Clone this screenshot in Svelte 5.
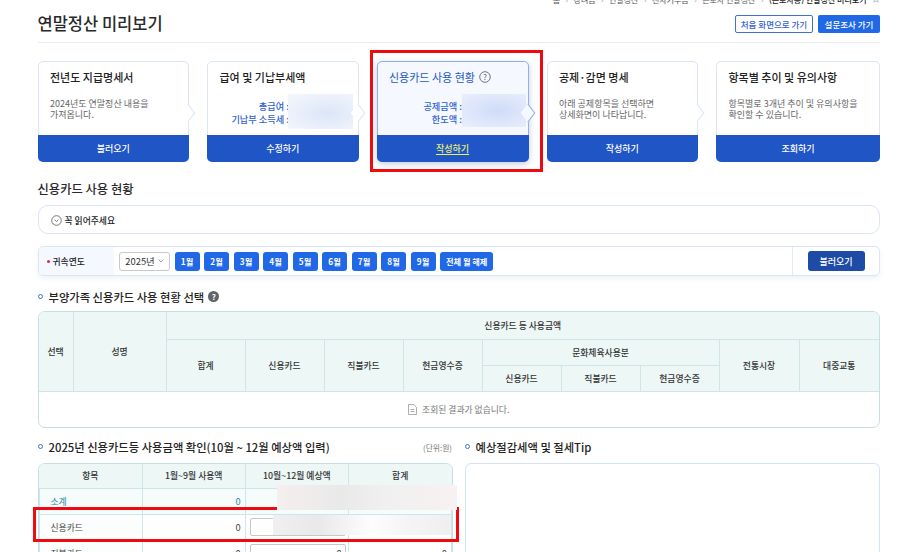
<script>
  const crumbs = ['홈', '장려금', '연말정산', '전자기부금', '근로자 연말정산']
  const steps = [
    { title: '전년도 지급명세서', lines: ['2024년도 연말정산 내용을', '가져옵니다.'], action: '불러오기' },
    { title: '급여 및 기납부세액', amounts: ['총급여 :', '기납부 소득세 :'], action: '수정하기' },
    { title: '신용카드 사용 현황', amounts: ['공제금액 :', '한도액 :'], action: '작성하기', active: true },
    { title: '공제·감면 명세', lines: ['아래 공제항목을 선택하면', '상세화면이 나타납니다.'], action: '작성하기' },
    { title: '항목별 추이 및 유의사항', lines: ['항목별로 3개년 추이 및 유의사항을', '확인할 수 있습니다.'], action: '조회하기' },
  ]
  const months = ['1월', '2월', '3월', '4월', '5월', '6월', '7월', '8월', '9월', '전체 월 해제']
  const rows = [
    { name: '소계', used: '0', total: true },
    { name: '신용카드', used: '0', est: '0', sum: '0' },
    { name: '직불카드', used: '0', est: '0', sum: '0' },
  ]
</script>

<div class="page">
  <nav class="crumbs">
    {#each crumbs as c}
      <span>{c}</span><i>›</i>
    {/each}
    <b>(근로자용) 연말정산 미리보기</b>
    <svg width="8" height="8" viewBox="0 0 8 8"><path d="M4 .6l1 2.3 2.5.2-1.9 1.6.6 2.5L4 5.900 1.800 7.200l.6-2.500L.5 3.100 3 2.900z" fill="none" stroke="#aaa" stroke-width=".7"/></svg>
  </nav>

  <header class="head">
    <h1>연말정산 미리보기</h1>
    <div class="head-btns">
      <button class="ghost">처음 화면으로 가기</button>
      <button class="solid">설문조사 가기</button>
    </div>
  </header>

  <div class="steps">
    {#each steps as s}
      <section class="step" class:active={s.active}>
        <div class="step-body">
          <h2>
            {s.title}
            {#if s.active}
              <svg class="q" width="12" height="12" viewBox="0 0 12 12"><circle cx="6" cy="6" r="5.300" fill="none" stroke="#555" stroke-width=".8"/><text x="6" y="8.600" text-anchor="middle" font-size="7.500" fill="#555">?</text></svg>
            {/if}
          </h2>
          {#if s.lines}
            <p class="desc">{s.lines[0]}<br />{s.lines[1]}</p>
          {:else}
            <div class="amounts">
              {#each s.amounts as a}<div>{a}</div>{/each}
            </div>
            <div class="smudge"></div>
          {/if}
        </div>
        <button class="step-btn">{s.action}</button>
      </section>
    {/each}
  </div>

  <h3 class="sec">신용카드 사용 현황</h3>

  <div class="notice">
    <svg width="11" height="11" viewBox="0 0 11 11"><circle cx="5.500" cy="5.500" r="4.800" fill="none" stroke="#555" stroke-width=".8"/><path d="M3.600 4.700l1.900 1.800 1.900-1.800" fill="none" stroke="#555" stroke-width=".8"/></svg>
    꼭 읽어주세요
  </div>

  <div class="filter">
    <div class="filter-label"><em></em>귀속연도</div>
    <div class="filter-main">
      <div class="select">2025년 <svg width="6" height="4" viewBox="0 0 6 4"><path d="M.5.500L3 3 5.500.500" fill="none" stroke="#888" stroke-width=".8"/></svg></div>
      {#each months as m}
        <button class="month">{m}</button>
      {/each}
    </div>
    <div class="filter-end"><button class="load">불러오기</button></div>
  </div>

  <h4 class="sub">부양가족 신용카드 사용 현황 선택 <span class="hint">?</span></h4>

  <div class="tbl">
    <table class="usage">
      <colgroup>
        <col style="width:34.500px" /><col style="width:93px" />
        <col span="7" style="width:79px" />
        <col style="width:80px" /><col />
      </colgroup>
      <thead>
        <tr class="r1"><th rowspan="3">선택</th><th rowspan="3">성명</th><th colspan="9">신용카드 등 사용금액</th></tr>
        <tr class="r2">
          <th rowspan="2">합계</th><th rowspan="2">신용카드</th><th rowspan="2">직불카드</th><th rowspan="2">현금영수증</th>
          <th colspan="3">문화체육사용분</th>
          <th rowspan="2">전통시장</th><th rowspan="2">대중교통</th>
        </tr>
        <tr class="r3"><th>신용카드</th><th>직불카드</th><th>현금영수증</th></tr>
      </thead>
      <tbody>
        <tr>
          <td colspan="11" class="empty">
            <svg width="9" height="11" viewBox="0 0 9 11"><path d="M.5.500h5.200L8.500 3.300v7.200H.5z M2.500 5.500h4 M2.500 7.500h4" fill="none" stroke="#999" stroke-width=".8"/></svg>
            조회된 결과가 없습니다.
          </td>
        </tr>
      </tbody>
    </table>
  </div>

  <div class="bottom">
    <div>
      <div class="bottom-head">
        <h4 class="sub">2025년 신용카드등 사용금액 확인(10월 ~ 12월 예상액 입력)</h4>
        <small>(단위:원)</small>
      </div>
      <div class="tbl">
        <table class="amount">
          <thead><tr><th>항목</th><th>1월~9월 사용액</th><th>10월~12월 예상액</th><th>합계</th></tr></thead>
          <tbody>
            {#each rows as r}
              <tr class:total={r.total}>
                <td class="name">{r.name}</td>
                <td class="num">{r.used}</td>
                <td class="num">{#if !r.total}<input value={r.est} readonly />{/if}</td>
                <td class="num">{r.sum ?? ''}</td>
              </tr>
            {/each}
          </tbody>
        </table>
      </div>
    </div>
    <div>
      <div class="bottom-head"><h4 class="sub">예상절감세액 및 절세Tip</h4></div>
      <div class="tip"></div>
    </div>
  </div>

  <!-- red marks drawn over the capture, blurred-out values pasted on top of them -->
  <div class="mark m1"></div>
  <div class="mark m2"></div>
  <div class="blur b1"></div>
  <div class="blur b2"></div>
</div>

<style>
  :global(body) {
    margin: 0;
    background: #fff;
  }

  .page {
    position: relative;
    width: 897px;
    height: 552px;
    overflow: hidden;
    box-sizing: border-box;
    padding: 0 17px 0 37.5px;
    font-family: "Noto Sans CJK KR", "Noto Sans", sans-serif;
    color: #222;
  }

  button {
    font: inherit;
    border: 0;
    padding: 0;
    cursor: pointer;
  }

  .crumbs {
    display: flex;
    justify-content: flex-end;
    align-items: center;
    gap: 5.500px;
    height: 10px;
    margin-top: -6px;
    font-size: 8px;
    color: #555;
    white-space: nowrap;
  }

  .crumbs i {
    font-style: normal;
    color: #999;
  }

  .crumbs b {
    font-weight: 500;
    color: #222;
  }

  .head {
    display: flex;
    justify-content: space-between;
    align-items: center;
    height: 37.500px;
    border-bottom: 1px solid #e9ebef;
  }

  h1 {
    margin: 0;
    font-size: 16.500px;
    font-weight: 500;
    color: #2a2a2a;
  }

  .head-btns {
    display: flex;
    gap: 5px;
    margin-top: 3px;
  }

  .head-btns button {
    height: 18px;
    border-radius: 2px;
    font-size: 8.500px;
    font-weight: 500;
    box-sizing: border-box;
  }

  .ghost {
    width: 78px;
    background: #fff;
    border: 1px solid #3f6fe0;
    color: #3460d0;
  }

  .solid {
    width: 62px;
    background: #2168e6;
    color: #fff;
  }

  .steps {
    display: grid;
    grid-template-columns: 151.500px 151.500px 152px 151.500px 1fr;
    gap: 18px;
    margin-top: 18px;
  }

  .step {
    position: relative;
    display: flex;
    flex-direction: column;
    height: 101px;
    box-sizing: border-box;
    border: 1px solid #dbe5f7;
    border-radius: 5px;
    background: #fff;
  }

  .step:not(:last-child)::after {
    content: "";
    position: absolute;
    right: -6px;
    top: 45px;
    width: 11px;
    height: 11px;
    background: inherit;
    border-top: 1px solid #dbe5f7;
    border-right: 1px solid #dbe5f7;
    transform: rotate(45deg) skew(8deg, 8deg);
  }

  .step.active {
    background: #f6f8ff;
    border-color: #94aee6;
    box-shadow: 0 2px 6px rgba(40, 70, 140, 0.28);
  }

  .step.active::after {
    border-color: #94aee6;
  }

  .step-body {
    position: relative;
    flex: 1;
    padding: 8px 11.500px 0;
    min-height: 0;
  }

  h2 {
    display: flex;
    align-items: center;
    gap: 4px;
    margin: 0;
    height: 14px;
    font-size: 11px;
    font-weight: 500;
    color: #222;
  }

  .active h2 {
    color: #2559c4;
    font-weight: 400;
  }

  .desc {
    margin: 14px 0 0;
    font-size: 9px;
    line-height: 11.500px;
    color: #666;
  }

  .amounts {
    margin: 16px 0 0;
    padding-right: 57px;
    text-align: right;
    font-size: 9.200px;
    line-height: 13.500px;
    font-weight: 500;
    color: #2e62d2;
    white-space: nowrap;
  }

  .active .amounts {
    padding-right: 54px;
  }

  .smudge {
    position: absolute;
    left: 80px;
    top: 32px;
    width: 65px;
    height: 35px;
    background: radial-gradient(ellipse at 60% 55%, #dce6f8, #eef2fb 70%, #f4f7fd);
  }

  .active .smudge {
    left: 84px;
    width: 64px;
    height: 33px;
    background: radial-gradient(ellipse at 55% 50%, #cfdcf8, #e3eafb 75%, #eaf0fc);
  }

  .step-btn {
    position: relative;
    z-index: 1;
    height: 27px;
    flex: none;
    margin: 0 -1px -1px;
    border-radius: 0 0 5px 5px;
    background: #1f55c4;
    color: #fff;
    font-size: 9px;
    font-weight: 500;
  }

  .active .step-btn {
    color: #ecf068;
    text-decoration: underline;
    text-underline-offset: 2px;
  }

  .sec {
    margin: 19px 0 0;
    height: 17px;
    line-height: 17px;
    font-size: 12.300px;
    font-weight: 500;
    color: #2a2a2a;
  }

  .notice {
    display: flex;
    align-items: center;
    gap: 3px;
    margin-top: 7.500px;
    height: 29px;
    box-sizing: border-box;
    padding: 1px 0 0 12px;
    border: 1px solid #dbe5f7;
    border-radius: 10px;
    font-size: 8.800px;
    font-weight: 500;
  }

  .filter {
    display: flex;
    margin-top: 12px;
    height: 30px;
    box-sizing: border-box;
    border: 1px solid #dbe5f7;
    border-radius: 5px;
    box-shadow: 0 3px 5px rgba(90, 100, 130, 0.08);
    overflow: hidden;
  }

  .filter-label {
    display: flex;
    align-items: center;
    gap: 3px;
    width: 75px;
    padding-left: 8px;
    box-sizing: border-box;
    background: #f5f8ff;
    font-size: 8.800px;
    font-weight: 500;
  }

  .filter-label em {
    width: 3px;
    height: 3px;
    border-radius: 50%;
    background: #e0245e;
  }

  .filter-main {
    display: flex;
    flex: 1;
    align-items: center;
    gap: 4.500px;
    padding-left: 5.500px;
  }

  .select {
    display: flex;
    align-items: center;
    justify-content: center;
    gap: 3px;
    width: 51px;
    height: 19px;
    box-sizing: border-box;
    border: 1px solid #c9c9c9;
    border-radius: 3px;
    font-size: 9.400px;
    color: #333;
  }

  .month {
    height: 19px;
    min-width: 25px;
    padding: 0 6px;
    border-radius: 3px;
    background: #2168e6;
    color: #fff;
    font-size: 8.200px;
    font-weight: 700;
  }

  .filter-end {
    display: flex;
    align-items: center;
    width: 87px;
    box-sizing: border-box;
    padding-left: 14.500px;
    border-left: 1px solid #e3e9f5;
  }

  .load {
    width: 57px;
    height: 20px;
    border-radius: 3px;
    background: #1e4ba6;
    color: #fff;
    font-size: 9px;
    font-weight: 500;
  }

  .sub {
    position: relative;
    display: flex;
    align-items: center;
    gap: 4px;
    margin: 0;
    padding-left: 11px;
    height: 16px;
    font-size: 11.300px;
    font-weight: 500;
    color: #222;
    white-space: nowrap;
  }

  .sub::before {
    content: "";
    position: absolute;
    left: 0;
    top: 5px;
    width: 3px;
    height: 3px;
    border: 1.500px solid #3f72e0;
    border-radius: 50%;
  }

  .filter + .sub {
    margin-top: 12.500px;
  }

  .hint {
    display: inline-flex;
    align-items: center;
    justify-content: center;
    width: 11px;
    height: 11px;
    border-radius: 50%;
    background: #606468;
    color: #fff;
    font-size: 8px;
    font-weight: 700;
  }

  .tbl {
    box-sizing: border-box;
    border: 1px solid #c5dfe2;
    border-radius: 7px;
    overflow: hidden;
  }

  .filter + .sub + .tbl {
    margin-top: 6.500px;
  }

  table {
    width: 100%;
    border-collapse: collapse;
    table-layout: fixed;
    font-size: 8.800px;
  }

  th {
    padding: 0;
    font-weight: 500;
    color: #333;
    background: #edf7f6;
    border: 1px solid #cfe5e8;
  }

  tr > :first-child {
    border-left: 0;
  }

  tr > :last-child {
    border-right: 0;
  }

  thead tr:first-child th {
    border-top: 0;
  }

  .r1 { height: 27px; }
  .r2 { height: 26px; }
  .r3 { height: 26px; }

  .empty {
    height: 35px;
    padding: 0;
    text-align: center;
    color: #777;
    font-size: 8.800px;
  }

  .empty svg {
    vertical-align: -2px;
    margin-right: 3px;
  }

  .bottom {
    display: grid;
    grid-template-columns: 415.500px 1fr;
    gap: 11.500px;
    margin-top: 11.500px;
  }

  .bottom-head {
    display: flex;
    justify-content: space-between;
    align-items: center;
    height: 16px;
    margin-bottom: 8px;
  }

  .bottom-head small {
    font-size: 7.800px;
    color: #777;
    margin-right: 1px;
  }

  .amount thead tr {
    height: 24px;
  }

  .amount td {
    height: 26px;
    padding: 0 4px;
    box-sizing: border-box;
    border: 1px solid #cfe5e8;
    color: #444;
    font-size: 9.300px;
  }

  .amount td.name {
    padding-left: 11px;
    background: #fcfdfd;
    font-size: 8.800px;
  }

  .amount .num {
    text-align: right;
  }

  .total td {
    background: #f6fbfb;
    color: #1f8ba0 !important;
  }

  .total td.name {
    background: #f6fbfb;
  }

  input {
    display: block;
    width: 96px;
    height: 18px;
    margin-left: auto;
    box-sizing: border-box;
    padding: 0 3px;
    border: 1px solid #c8c8c8;
    border-radius: 2px;
    font: inherit;
    color: #444;
    text-align: right;
  }

  .tip {
    height: 120px;
    border: 1px solid #d6e2f5;
    border-radius: 6px;
  }

  .blur {
    position: absolute;
  }

  .b1 {
    left: 277px;
    top: 485px;
    width: 179.500px;
    height: 25px;
    background: linear-gradient(90deg, #f5efef, #e9e9e9 35%, #f0f0f0 60%, #f8f1f1);
  }

  .b2 {
    left: 273px;
    top: 515px;
    width: 178px;
    height: 20px;
    background: linear-gradient(90deg, #f0f0f0, #e9e9e9 25%, #fdfdfd 55%, #f5f5f5 75%, #efefef);
  }

  .mark {
    position: absolute;
    box-sizing: border-box;
    border: 3px solid #ee0a0f;
  }

  .m1 {
    left: 369.500px;
    top: 50px;
    width: 173px;
    height: 122px;
  }

  .m2 {
    left: 33px;
    top: 507px;
    width: 426px;
    height: 34.500px;
  }
</style>
